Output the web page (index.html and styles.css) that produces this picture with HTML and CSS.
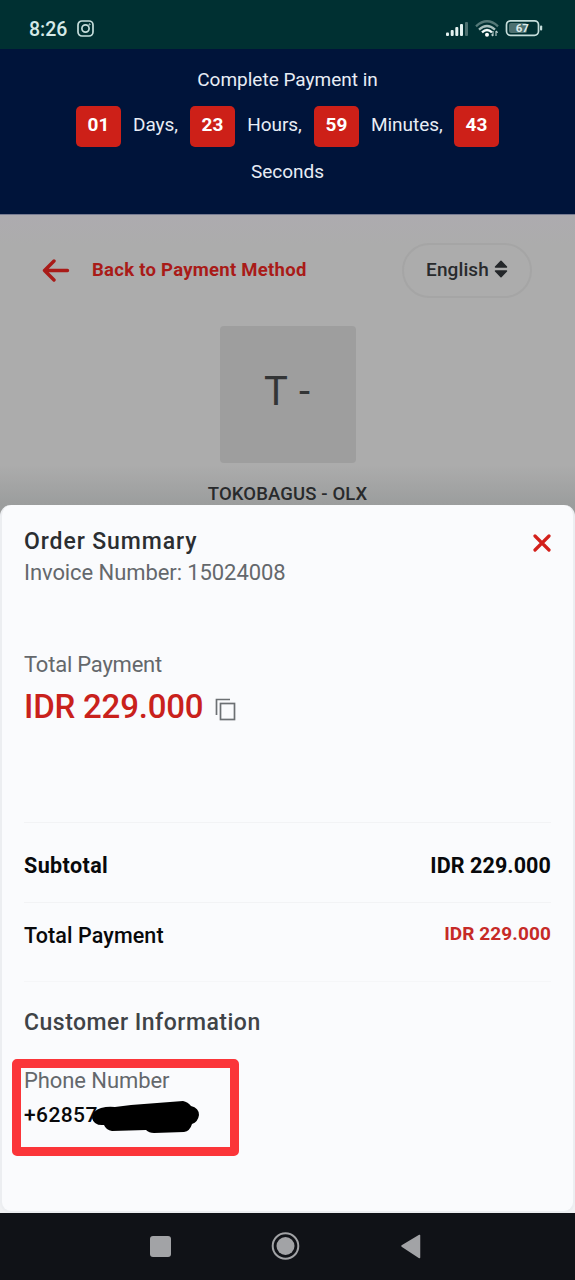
FILE: index.html
```
<!DOCTYPE html>
<html lang="en">
<head>
<meta charset="utf-8">
<title>Payment</title>
<link rel="stylesheet" href="styles.css">
</head>
<body>
<div class="phone">
  <div class="status">
    <span class="clock">8:26</span>
    <svg class="insta" width="17" height="17" viewBox="0 0 17 17" fill="none" stroke="#c5dddb" stroke-width="1.7"><rect x="1" y="1" width="15" height="15" rx="4"/><circle cx="8.5" cy="8.5" r="3.6"/><circle cx="12.6" cy="4.4" r=".6" stroke-width="1"/></svg>
    <svg class="indicators" width="100" height="22" viewBox="0 0 100 22">
      <g fill="#e3f1f0"><rect x="1" y="14.5" width="3" height="3.5" rx="1"/><rect x="5.7" y="12" width="3" height="6" rx="1"/><rect x="10.3" y="9" width="3" height="9" rx="1"/><rect x="15" y="6" width="3" height="12" rx="1"/></g>
      <rect x="20" y="4" width="3" height="14" rx="1" fill="#4d7070"/>
      <g fill="none" stroke-width="2.3"><path d="M31 8.3Q42-1.7 53 8.3" stroke="#557978"/><path d="M34 11.6Q42 4.3 50 11.6" stroke="#a9c0be"/><path d="M37 14.4Q42 9.6 47 14.4" stroke="#f2fafa"/></g>
      <circle cx="42" cy="16.8" r="2" fill="#fff"/>
      <path d="M48 18v-5m-1.5 3.5L48 18M51 13v5m0-5 1.7 1.7" stroke="#bfd3d2" stroke-width="1.1" fill="none"/>
      <rect x="61.5" y="2.8" width="32" height="14.500" rx="4" fill="none" stroke="#c5dddb" stroke-width="1.7"/>
      <rect x="64" y="5" width="18" height="10" rx="2" fill="#4d7070"/>
      <rect x="95" y="7.500" width="2.200" height="5" rx="1" fill="#c5dddb"/>
      <text class="charge" x="77.300" y="14.200" text-anchor="middle">67</text>
    </svg>
  </div>
  <header class="countdown">
    <div class="count-line">Complete Payment in</div>
    <div class="count-row">
      <b class="tile">01</b><span class="unit days">Days,</span>
      <b class="tile">23</b><span class="unit hours">Hours,</span>
      <b class="tile">59</b><span class="unit minutes">Minutes,</span>
      <b class="tile">43</b>
    </div>
    <div class="count-line">Seconds</div>
  </header>
  <main class="page">
    <div class="toolbar">
      <svg width="28" height="24" viewBox="0 0 28 24" fill="none" stroke="#a91b18" stroke-width="3.400" stroke-linecap="round" stroke-linejoin="round"><path d="M25.500 11.500H2.500M12 2 2.500 11.500 12 21"/></svg>
      <span class="back">Back to Payment Method</span>
      <span class="lang">English
        <svg width="14" height="18" viewBox="0 0 14 18" fill="#24272a" stroke="#24272a" stroke-width="1.500" stroke-linejoin="round"><path d="M7 1.200 12.500 7h-11zM7 16.800 12.500 11h-11z"/></svg>
      </span>
    </div>
    <div class="avatar">T -</div>
    <div class="merchant">TOKOBAGUS - OLX</div>
  </main>
  <section class="sheet">
    <div class="sheet-head">
      <h1>Order Summary</h1>
      <svg width="18" height="18" viewBox="0 0 18 18" fill="none" stroke="#d3201b" stroke-width="3.200" stroke-linecap="round"><path d="M2 2l14 14M16 2 2 16"/></svg>
    </div>
    <div class="label invoice">Invoice Number: 15024008</div>
    <div class="label total-label">Total Payment</div>
    <div class="amount"><span>IDR 229.000</span>
      <svg width="22" height="24" viewBox="0 0 22 24" fill="none" stroke="#6c7073" stroke-width="1.700"><path d="M1.500 17V1.500H15"/><rect x="5.500" y="5.500" width="14" height="16"/></svg>
    </div>
    <div class="row subtotal"><span>Subtotal</span><b>IDR 229.000</b></div>
    <div class="row total"><span>Total Payment</span><b class="red">IDR 229.000</b></div>
    <div class="customer">
      <h2>Customer Information</h2>
      <div class="label phone-label">Phone Number</div>
      <div class="number">+62857</div>
      <svg class="scribble" width="110" height="34" viewBox="0 0 110 34"><path d="M10 8Q17 6 24 7L40 5 92 1Q97 2 100 6 108 8 108 15 107 22 101 24 99 31 93 32L63 33Q58 33 55 30L21 31Q15 30 13 25 3 26 1 18 2 10 10 8Z"/></svg>
      <div class="highlight"></div>
    </div>
  </section>
  <nav class="nav">
    <svg width="575" height="66" viewBox="0 0 575 66" fill="#a2a3a6"><rect x="150" y="23" width="21" height="21" rx="3"/><circle cx="285.500" cy="33" r="9"/><circle cx="285.500" cy="33" r="12.800" fill="none" stroke="#a2a3a6" stroke-width="2"/><path d="M402 33 419.500 22.500v22z" stroke="#a2a3a6" stroke-width="1.500" stroke-linejoin="round"/></svg>
  </nav>
</div>
</body>
</html>
```
FILE: styles.css
```
* { box-sizing: border-box; }
body { margin: 0; font-family: Roboto, "Liberation Sans", sans-serif; }
svg { display: block; flex: none; }
h1, h2 { margin: 0; font-weight: 500; }
.phone { width: 575px; height: 1280px; display: flex; flex-direction: column; background: #f0f1f3; overflow: hidden; }
.status { height: 49px; background: #003032; display: flex; align-items: center; padding: 9px 30px 0 29px; }
.clock { color: #d5e9e7; font-size: 19.5px; font-weight: 500; }
.insta { margin-left: 10px; margin-top: -2px; }
.indicators { margin-left: auto; }
.charge { font: 700 11.5px Roboto, sans-serif; fill: #dcebea; }
.countdown { height: 166px; background: #00143a; color: #e8edf5; font-size: 19px; padding-top: 15px; text-align: center; border-bottom: 1px solid #777b91; }
.count-line { line-height: 32px; }
.count-row { display: flex; justify-content: center; gap: 12px; height: 41px; margin: 10px 0 9px; line-height: 38px; }
.tile { width: 45px; background: #cd2018; color: #fff; border-radius: 5px; font-size: 19px; }
.unit { white-space: nowrap; letter-spacing: -0.05px; }
.days { width: 45px; }
.hours { width: 55px; }
.minutes { width: 71px; }
.page { height: 301px; flex: none; background: linear-gradient(#adabaf 0, #acacac 30px, #acacac 250px, #9b9d9d 290px); padding-top: 28px; color: #282a2c; display: flex; flex-direction: column; align-items: center; }
.toolbar { align-self: stretch; height: 55px; padding: 0 43px 0 42px; display: flex; align-items: center; }
.back { margin-left: 22px; color: #a91b18; font-weight: 700; font-size: 18.5px; letter-spacing: 0.27px; padding-bottom: 2px; }
.lang { margin-left: auto; width: 130px; height: 55px; border: 2px solid #a5a5a5; border-radius: 28px; display: flex; align-items: center; justify-content: center; gap: 5px; font-size: 19px; letter-spacing: 0.1px; font-weight: 500; padding-bottom: 3px; }
.avatar { margin-top: 28px; width: 136px; height: 137px; border-radius: 4px; background: #9e9e9e; font-size: 40px; letter-spacing: 1px; line-height: 131px; text-align: center; color: #333536; }
.merchant { margin-top: 19px; line-height: 24px; font-size: 18.5px; letter-spacing: 0.13px; font-weight: 500; white-space: nowrap; }
.sheet { height: 708px; flex: none; margin-top: -11px; background: #fafbfd; border: 2px solid #eceef1; border-top: 0; border-radius: 11px; padding: 22px 22px 0; position: relative; }
.sheet-head { display: flex; justify-content: space-between; height: 30px; }
.sheet-head svg { margin-top: 7px; }
h1 { font-size: 23px; line-height: 30px; color: #2b2e31; letter-spacing: 0.9px; }
.label { font-size: 22px; line-height: 30px; color: #64686c; white-space: nowrap; letter-spacing: -0.08px; }
.invoice { margin-top: 1px; }
.total-label { margin-top: 62px; letter-spacing: -0.22px; }
.amount { display: flex; margin-top: 6px; height: 40px; gap: 12px; align-items: center; color: #c9211c; font-size: 33px; font-weight: 500; letter-spacing: -0.2px; }
.amount svg { margin-top: 7px; }
.row { display: flex; justify-content: space-between; border-top: 1px solid #f2f3f5; color: #08090b; font-size: 21.5px; font-weight: 500; line-height: 30px; }
.subtotal { margin-top: 96px; height: 80px; padding-top: 28px; }
.subtotal span { font-weight: 700; letter-spacing: 0.4px; }
.row b { font-weight: 700; letter-spacing: 0.1px; }
.total { height: 79px; padding-top: 16px; }
.total span { padding-top: 2px; letter-spacing: 0.1px; }
.total .red { color: #c62a27; font-size: 19px; }
.customer { border-top: 1px solid #f5f6f8; padding-top: 26px; position: relative; }
h2 { font-size: 23px; line-height: 30px; color: #3f4347; letter-spacing: 0.5px; }
.phone-label { margin-top: 28px; }
.number { margin-top: 4px; font-size: 21px; letter-spacing: 0.4px; line-height: 30px; font-weight: 500; color: #08090b; }
.scribble { position: absolute; left: 67px; top: 118px; }
.highlight { position: absolute; left: -12px; top: 77px; width: 227px; height: 97px; border: 9px solid #fb3539; border-radius: 5px; }
.nav { height: 67px; flex: none; background: #101217; }
```
